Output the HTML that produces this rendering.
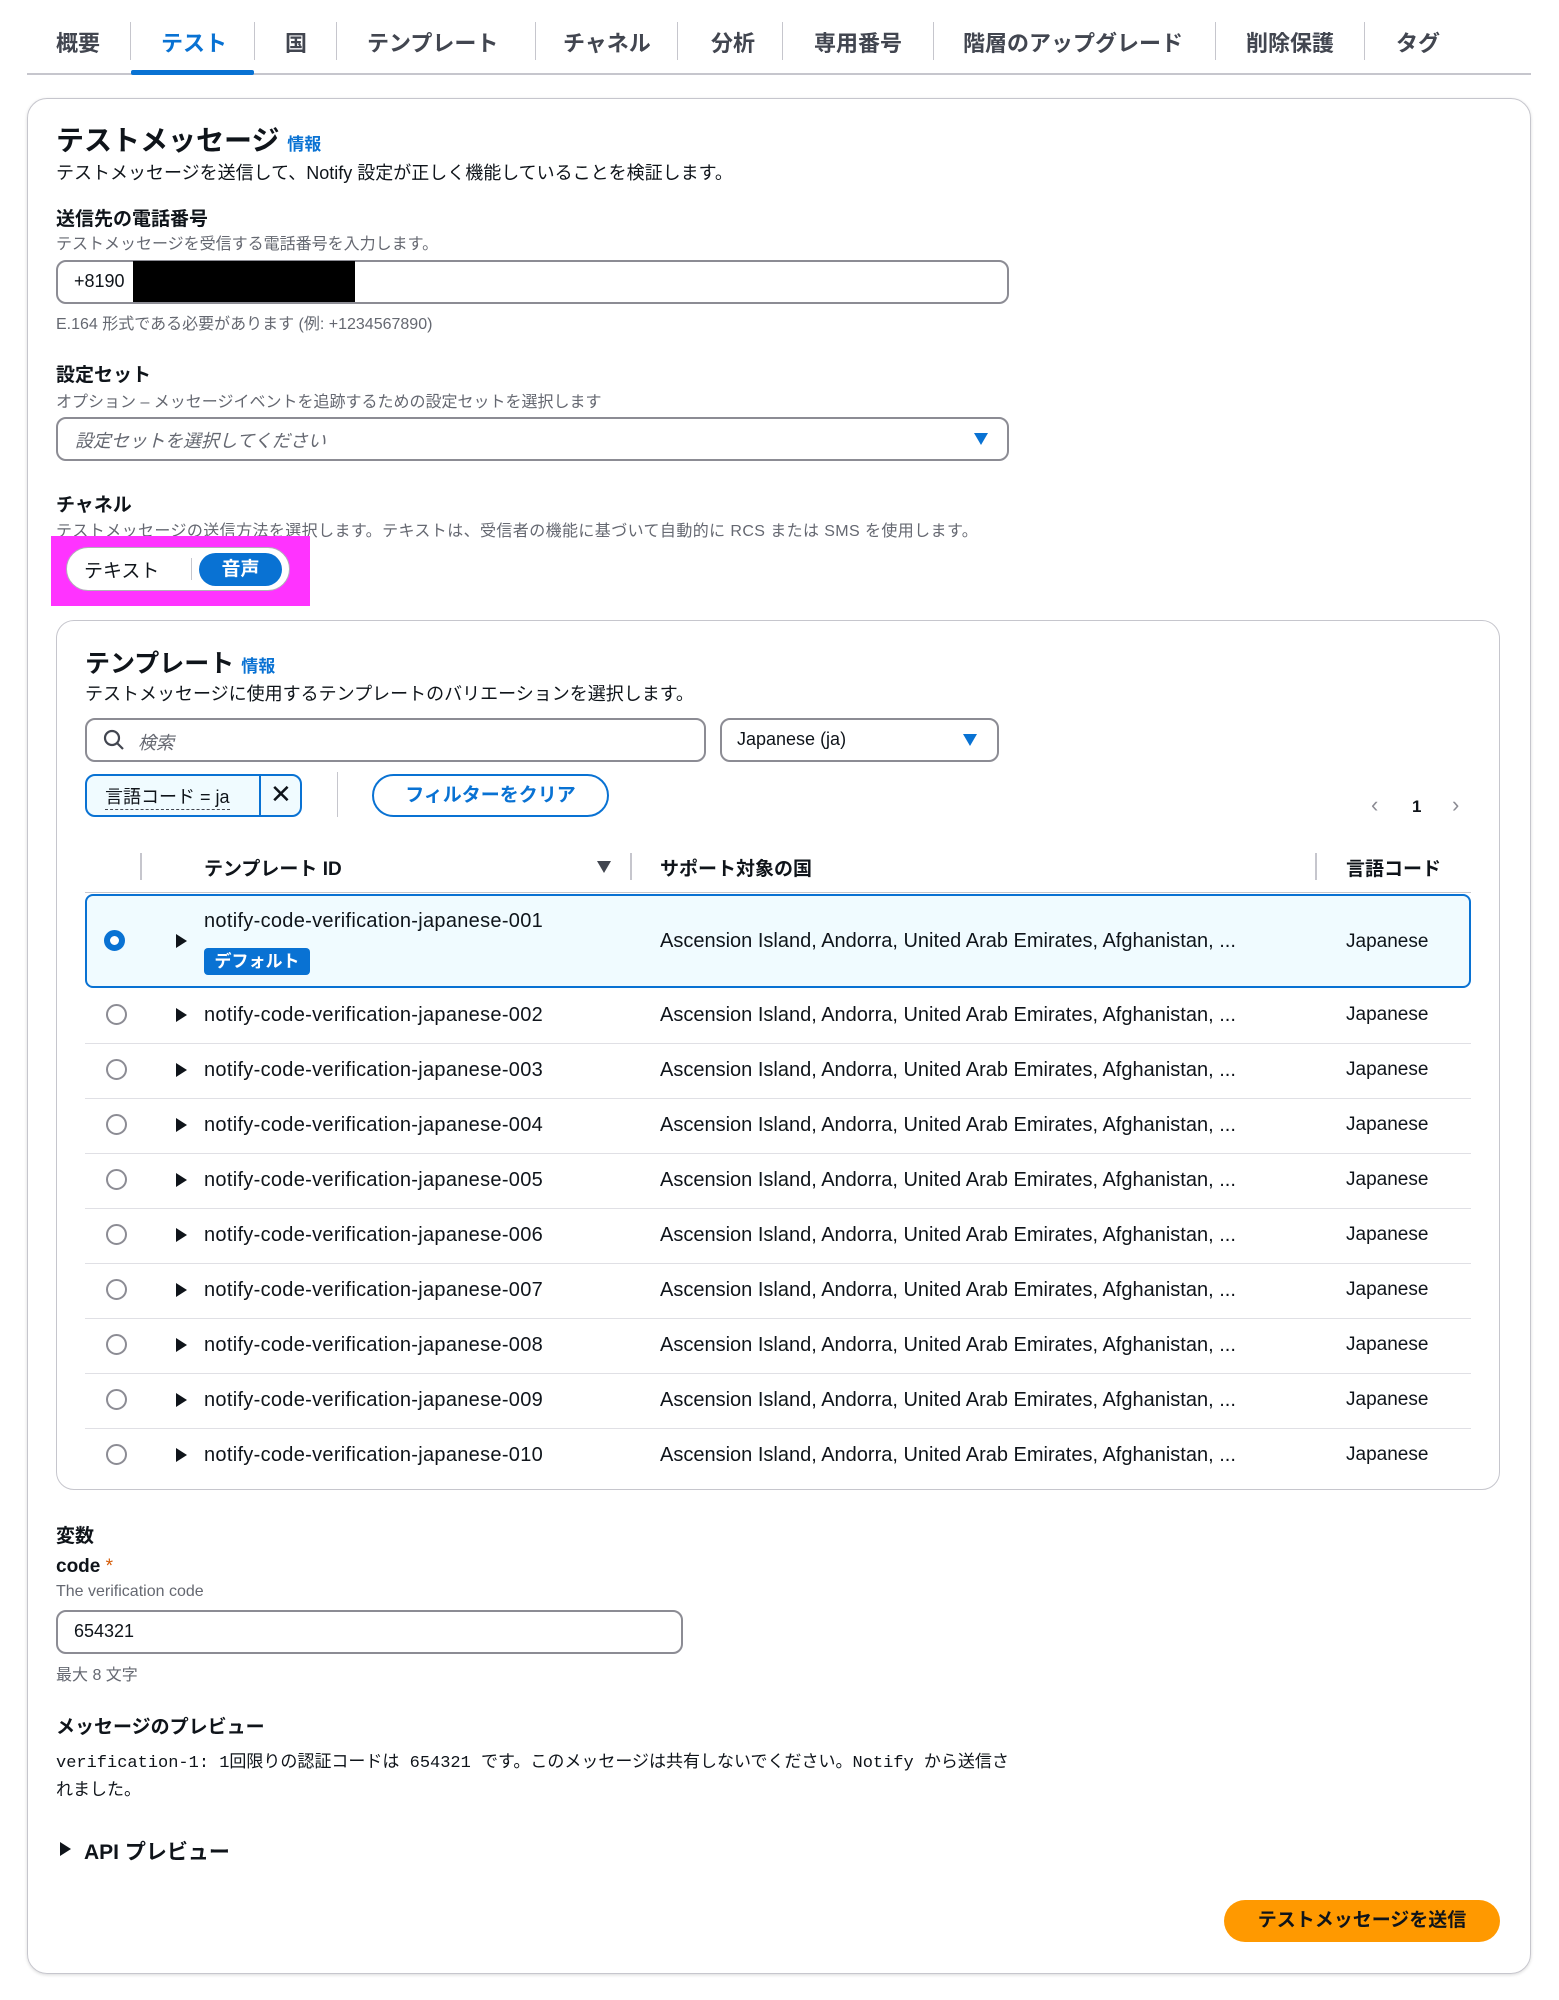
<!DOCTYPE html>
<html><head><meta charset="utf-8"><style>
*{box-sizing:border-box;margin:0;padding:0}
body{width:1559px;height:2000px;background:#fff;font-family:"Liberation Sans","Noto Sans CJK JP",sans-serif;color:#0f141a;position:relative;overflow:hidden}
.a{position:absolute;white-space:nowrap}
.tab{position:absolute;top:26px;font-size:22px;font-weight:bold;color:#424650}
.sep{position:absolute;top:22px;width:1px;height:38px;background:#c6c6cd}
.b{font-weight:bold}
.sub{font-size:16px;color:#656871}
.inp{position:absolute;border:2px solid #8c8c94;border-radius:10px;background:#fff}
.row{position:absolute;left:85px;width:1386px;height:55px;border-top:1px solid #e0e0e5;font-size:20px}
.row .r{position:absolute;left:21px;top:15px;width:21px;height:21px;border:2px solid #8c8c94;border-radius:50%}
.row .c{position:absolute;left:91px;top:19px;width:0;height:0;border-left:11px solid #0f141a;border-top:7px solid transparent;border-bottom:7px solid transparent}
.row .t{position:absolute;left:119px;top:15px;letter-spacing:0.3px}
.row .u{position:absolute;left:575px;top:15px}
.row .j{position:absolute;left:1261px;top:15px;font-size:19px}
</style></head><body>
<div class="tab" style="left:56px">概要</div>
<div class="tab" style="left:161px;color:#0972d3">テスト</div>
<div class="tab" style="left:285px">国</div>
<div class="tab" style="left:367px">テンプレート</div>
<div class="tab" style="left:563px">チャネル</div>
<div class="tab" style="left:711px">分析</div>
<div class="tab" style="left:814px">専用番号</div>
<div class="tab" style="left:963px">階層のアップグレード</div>
<div class="tab" style="left:1246px">削除保護</div>
<div class="tab" style="left:1396px">タグ</div>
<div class="sep" style="left:130px"></div><div class="sep" style="left:254px"></div><div class="sep" style="left:336px"></div><div class="sep" style="left:535px"></div><div class="sep" style="left:677px"></div><div class="sep" style="left:782px"></div><div class="sep" style="left:933px"></div><div class="sep" style="left:1215px"></div><div class="sep" style="left:1364px"></div>
<div class="a" style="left:27px;top:73px;width:1504px;height:2px;background:#c6c6cd"></div>
<div class="a" style="left:131px;top:70px;width:123px;height:5px;background:#0972d3;border-radius:2px"></div>

<div class="a" style="left:27px;top:98px;width:1504px;height:1876px;border:1px solid #c6c6cd;border-radius:20px;box-shadow:0 1px 3px rgba(0,0,0,.15)"></div>

<div class="a b" style="left:56px;top:119px;font-size:28px">テストメッセージ <span style="font-size:17px;color:#0972d3;font-weight:bold">情報</span></div>
<div class="a" style="left:56px;top:159px;font-size:18px">テストメッセージを送信して、Notify 設定が正しく機能していることを検証します。</div>
<div class="a b" style="left:56px;top:204px;font-size:19px">送信先の電話番号</div>
<div class="a sub" style="left:56px;top:230px">テストメッセージを受信する電話番号を入力します。</div>
<div class="inp" style="left:56px;top:260px;width:953px;height:44px"></div>
<div class="a" style="left:74px;top:271px;font-size:18px">+8190</div>
<div class="a" style="left:133px;top:261px;width:222px;height:41px;background:#000"></div>
<div class="a sub" style="left:56px;top:310px">E.164 形式である必要があります (例: +1234567890)</div>

<div class="a b" style="left:56px;top:360px;font-size:19px">設定セット</div>
<div class="a sub" style="left:56px;top:388px">オプション – メッセージイベントを追跡するための設定セットを選択します</div>
<div class="inp" style="left:56px;top:417px;width:953px;height:44px"></div>
<div class="a" style="left:75px;top:427px;font-size:18px;color:#656871;font-style:italic">設定セットを選択してください</div>
<div class="a" style="left:974px;top:433px;border-top:12px solid #0972d3;border-left:7px solid transparent;border-right:7px solid transparent"></div>

<div class="a b" style="left:56px;top:490px;font-size:19px">チャネル</div>
<div class="a sub" style="left:56px;top:517px;letter-spacing:0.4px">テストメッセージの送信方法を選択します。テキストは、受信者の機能に基づいて自動的に RCS または SMS を使用します。</div>
<div class="a" style="left:51px;top:536px;width:259px;height:70px;background:#ff33ff"></div>
<div class="a" style="left:66px;top:547px;width:224px;height:44px;background:#fff;border:1px solid #b0b0b8;border-radius:22px"></div>
<div class="a" style="left:84px;top:556px;font-size:19px">テキスト</div>
<div class="a" style="left:191px;top:558px;width:1px;height:22px;background:#c6c6cd"></div>
<div class="a b" style="left:199px;top:553px;width:83px;height:33px;background:#0972d3;border-radius:17px;color:#fff;font-size:19px;text-align:center;line-height:33px">音声</div>

<div class="a" style="left:56px;top:620px;width:1444px;height:870px;border:1px solid #c6c6cd;border-radius:18px"></div>
<div class="a b" style="left:85px;top:644px;font-size:25px">テンプレート <span style="font-size:17px;color:#0972d3">情報</span></div>
<div class="a" style="left:85px;top:680px;font-size:18px">テストメッセージに使用するテンプレートのバリエーションを選択します。</div>
<div class="inp" style="left:85px;top:718px;width:621px;height:44px"></div>
<svg class="a" style="left:103px;top:729px" width="22" height="22" viewBox="0 0 22 22"><circle cx="9" cy="9" r="7" fill="none" stroke="#424650" stroke-width="2.2"/><line x1="14" y1="14" x2="20" y2="20" stroke="#424650" stroke-width="2.2"/></svg>
<div class="a" style="left:138px;top:729px;font-size:18px;color:#656871;font-style:italic">検索</div>
<div class="inp" style="left:720px;top:718px;width:279px;height:44px"></div>
<div class="a" style="left:737px;top:729px;font-size:18px">Japanese (ja)</div>
<div class="a" style="left:963px;top:734px;border-top:12px solid #0972d3;border-left:7px solid transparent;border-right:7px solid transparent"></div>

<div class="a" style="left:85px;top:774px;width:217px;height:43px;border:2px solid #0972d3;border-radius:10px;background:#f0fbff"></div>
<div class="a" style="left:259px;top:775px;width:2px;height:41px;background:#0972d3"></div>
<div class="a" style="left:105px;top:783px;font-size:18px;border-bottom:1px dashed #424650">言語コード = ja</div>
<div class="a" style="left:270px;top:779px;font-size:26px">✕</div>
<div class="a" style="left:337px;top:772px;width:1px;height:45px;background:#c6c6cd"></div>
<div class="a b" style="left:372px;top:774px;width:237px;height:43px;border:2px solid #0972d3;border-radius:22px;color:#0972d3;font-size:19px;text-align:center;line-height:39px">フィルターをクリア</div>
<div class="a" style="left:1371px;top:792px;font-size:22px;color:#8c8c94">‹</div>
<div class="a b" style="left:1412px;top:797px;font-size:17px">1</div>
<div class="a" style="left:1452px;top:792px;font-size:22px;color:#8c8c94">›</div>

<div class="a" style="left:140px;top:853px;width:2px;height:27px;background:#c6c6cd"></div>
<div class="a" style="left:630px;top:853px;width:2px;height:27px;background:#c6c6cd"></div>
<div class="a" style="left:1315px;top:853px;width:2px;height:27px;background:#c6c6cd"></div>
<div class="a b" style="left:204px;top:854px;font-size:19px">テンプレート ID</div>
<div class="a" style="left:597px;top:861px;border-top:12px solid #424650;border-left:7px solid transparent;border-right:7px solid transparent"></div>
<div class="a b" style="left:660px;top:854px;font-size:19px">サポート対象の国</div>
<div class="a b" style="left:1346px;top:854px;font-size:19px">言語コード</div>
<div class="a" style="left:85px;top:892px;width:1386px;height:1px;background:#c6c6cd"></div>

<div class="a" style="left:85px;top:894px;width:1386px;height:94px;border:2px solid #0972d3;border-radius:8px;background:#f0fbff"></div>
<div class="a" style="left:104px;top:930px;width:21px;height:21px;border:6px solid #0972d3;border-radius:50%;background:#fff"></div>
<div class="a" style="left:176px;top:934px;border-left:11px solid #0f141a;border-top:7px solid transparent;border-bottom:7px solid transparent"></div>
<div class="a" style="left:204px;top:910px;font-size:20px;letter-spacing:0.3px">notify-code-verification-japanese-001</div>
<div class="a b" style="left:204px;top:948px;width:106px;height:27px;background:#0972d3;border-radius:4px;color:#fff;font-size:17px;text-align:center;line-height:27px">デフォルト</div>
<div class="a" style="left:660px;top:930px;font-size:20px">Ascension Island, Andorra, United Arab Emirates, Afghanistan, ...</div>
<div class="a" style="left:1346px;top:931px;font-size:19px">Japanese</div>

<div class="row" style="top:989px;border-top:none"><div class="r"></div><div class="c"></div><div class="t">notify-code-verification-japanese-002</div><div class="u">Ascension Island, Andorra, United Arab Emirates, Afghanistan, ...</div><div class="j">Japanese</div></div>
<div class="row" style="top:1043px"><div class="r"></div><div class="c"></div><div class="t">notify-code-verification-japanese-003</div><div class="u">Ascension Island, Andorra, United Arab Emirates, Afghanistan, ...</div><div class="j">Japanese</div></div>
<div class="row" style="top:1098px"><div class="r"></div><div class="c"></div><div class="t">notify-code-verification-japanese-004</div><div class="u">Ascension Island, Andorra, United Arab Emirates, Afghanistan, ...</div><div class="j">Japanese</div></div>
<div class="row" style="top:1153px"><div class="r"></div><div class="c"></div><div class="t">notify-code-verification-japanese-005</div><div class="u">Ascension Island, Andorra, United Arab Emirates, Afghanistan, ...</div><div class="j">Japanese</div></div>
<div class="row" style="top:1208px"><div class="r"></div><div class="c"></div><div class="t">notify-code-verification-japanese-006</div><div class="u">Ascension Island, Andorra, United Arab Emirates, Afghanistan, ...</div><div class="j">Japanese</div></div>
<div class="row" style="top:1263px"><div class="r"></div><div class="c"></div><div class="t">notify-code-verification-japanese-007</div><div class="u">Ascension Island, Andorra, United Arab Emirates, Afghanistan, ...</div><div class="j">Japanese</div></div>
<div class="row" style="top:1318px"><div class="r"></div><div class="c"></div><div class="t">notify-code-verification-japanese-008</div><div class="u">Ascension Island, Andorra, United Arab Emirates, Afghanistan, ...</div><div class="j">Japanese</div></div>
<div class="row" style="top:1373px"><div class="r"></div><div class="c"></div><div class="t">notify-code-verification-japanese-009</div><div class="u">Ascension Island, Andorra, United Arab Emirates, Afghanistan, ...</div><div class="j">Japanese</div></div>
<div class="row" style="top:1428px"><div class="r"></div><div class="c"></div><div class="t">notify-code-verification-japanese-010</div><div class="u">Ascension Island, Andorra, United Arab Emirates, Afghanistan, ...</div><div class="j">Japanese</div></div>

<div class="a b" style="left:56px;top:1521px;font-size:19px">変数</div>
<div class="a b" style="left:56px;top:1556px;font-size:19px">code <span style="color:#d45b07;font-weight:normal">*</span></div>
<div class="a sub" style="left:56px;top:1583px">The verification code</div>
<div class="inp" style="left:56px;top:1610px;width:627px;height:44px"></div>
<div class="a" style="left:74px;top:1621px;font-size:18px">654321</div>
<div class="a sub" style="left:56px;top:1661px">最大 8 文字</div>
<div class="a b" style="left:56px;top:1712px;font-size:19px">メッセージのプレビュー</div>
<div class="a" style="left:56px;top:1747px;font-size:17px;font-family:'Liberation Mono','Noto Sans CJK JP',monospace">verification-1: 1回限りの認証コードは 654321 です。このメッセージは共有しないでください。Notify から送信さ</div>
<div class="a" style="left:56px;top:1775px;font-size:17px;font-family:'Liberation Mono','Noto Sans CJK JP',monospace">れました。</div>
<div class="a" style="left:60px;top:1842px;border-left:11px solid #0f141a;border-top:7px solid transparent;border-bottom:7px solid transparent"></div>
<div class="a b" style="left:84px;top:1836px;font-size:21px">API プレビュー</div>
<div class="a b" style="left:1224px;top:1900px;width:276px;height:42px;background:#ff9900;border-radius:21px;font-size:19px;text-align:center;line-height:42px">テストメッセージを送信</div>
</body></html>
